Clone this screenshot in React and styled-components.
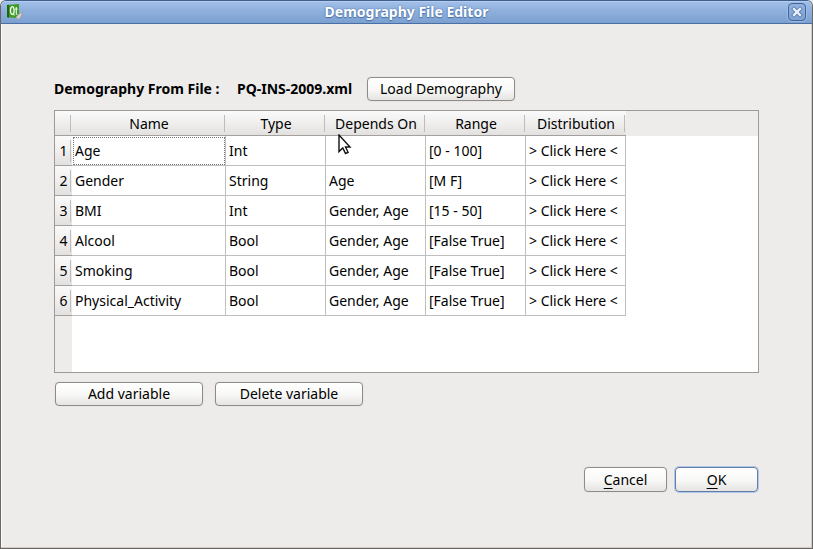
import React from "react";
import styled, { createGlobalStyle, css } from "styled-components";

const GlobalStyle = createGlobalStyle`
  *, *::before, *::after { box-sizing: border-box; }
  body {
    margin: 0;
    background: #edeceb;
    color: #000;
    font: 14px/20px "Noto Sans", "Open Sans", sans-serif;
  }
`;

const Dialog = styled.div`
  display: flex;
  flex-direction: column;
  min-height: 100vh;
  overflow: hidden;
  background: #edeceb;
  border: 1px solid #6b6764;
  border-top-color: #3f5f8c;
  border-radius: 6px 6px 0 0;
  box-shadow: inset -1px -1px 0 #cfcdcb, inset 1px 0 0 #fbfbfa;
`;

const TitleBar = styled.header`
  display: grid;
  grid-template-columns: 24px 1fr 24px;
  align-items: center;
  height: 23px;
  background: linear-gradient(#a3c0e8, #8fb0dd 45%, #7ba0d0);
  border-bottom: 1px solid #4a6fa5;
  box-shadow: inset 0 1px 0 #b4cdf0;
`;

const AppIcon = styled.svg`
  width: 16px;
  height: 16px;
  margin-left: 6px;
`;

const Title = styled.h1`
  margin: 0;
  text-align: center;
  font-size: 14px;
  line-height: 20px;
  font-weight: 700;
  color: #fff;
  text-shadow: 0 0 2px #4a70a8, 0 1px 1px #4a70a8;
`;

const CloseButton = styled.button`
  display: grid;
  place-items: center;
  width: 18px;
  height: 18px;
  padding: 0;
  border: 1px solid #41659a;
  border-radius: 4px;
  background: linear-gradient(#92b2df, #7ea2d3);
  box-shadow: 0 0 0 1px #9dbbe5;
`;

const Content = styled.main`
  display: flex;
  flex: 1;
  flex-direction: column;
  padding: 53px 53px 56px;
`;

const FileRow = styled.div`
  display: flex;
  align-items: center;
  margin-bottom: 9px;
`;

const FileLabel = styled.span`
  width: 183px;
  font-weight: 700;
  white-space: nowrap;
`;

const FileName = styled.strong`
  width: 130px;
  white-space: nowrap;
`;

const Button = styled.button`
  width: ${(p) => (p.$small ? 83 : 148)}px;
  height: ${(p) => (p.$small ? 25 : 24)}px;
  padding: 0;
  border: 1px solid #8f8b88;
  border-radius: 4px;
  background: linear-gradient(#fff, #f9f9f8 50%, #e5e4e2);
  box-shadow: 0 0 1px #bdbab7;
  color: #000;
  font: inherit;
  ${(p) =>
    p.$primary &&
    css`
      border-color: #5f7fae;
      box-shadow: 0 0 0 1px #b4c7e2;
    `}
`;

const Mnemonic = styled.span`
  text-decoration: underline;
  text-underline-offset: 3px;
  text-decoration-skip-ink: none;
`;

const TableFrame = styled.div`
  min-height: 263px;
  border: 1px solid #9c9997;
  background:
    linear-gradient(#edeceb, #edeceb) 0 0 / 100% 25px no-repeat,
    linear-gradient(#edeceb, #edeceb) 0 0 / 17px 100% no-repeat,
    #fff;
`;

const Table = styled.table`
  width: 571px;
  table-layout: fixed;
  border-collapse: separate;
  border-spacing: 0;
`;

const Col = styled.col`
  width: ${(p) => p.$width}px;
`;

const HeadCell = styled.th`
  position: relative;
  height: 25px;
  padding: 2px 0 0;
  border-bottom: 1px solid #a3a09e;
  background:
    linear-gradient(#bfbdbb, #bfbdbb) right 1px center / 1px 17px no-repeat,
    linear-gradient(#fafafa, #f0efee 50%, #e2e1df);
  font-weight: 400;
  text-align: center;
  white-space: nowrap;
`;

const RowHead = styled(HeadCell)`
  height: 30px;
  padding: 0;
  background:
    linear-gradient(#bfbdbb, #bfbdbb) right 1px center / 1px 22px no-repeat,
    linear-gradient(#fafafa, #f0efee 50%, #e2e1df);
`;

const Cell = styled.td`
  height: 30px;
  padding: 0 3px;
  border-right: 1px solid #bfbfbf;
  border-bottom: 1px solid #bfbfbf;
  background: #fff;
  white-space: nowrap;
  ${(p) =>
    p.$focused &&
    css`
      outline: 1px dotted #777;
      outline-offset: -2px;
    `}
`;

const Actions = styled.div`
  display: flex;
  gap: 12px;
  padding: 9px 1px 0;
`;

const Footer = styled.footer`
  display: flex;
  justify-content: flex-end;
  gap: 8px;
  margin-top: auto;
  padding-right: 1px;
`;

const Pointer = styled.svg`
  position: absolute;
  z-index: 1;
  top: 23px;
  left: 12px;
  width: 14px;
  height: 21px;
  pointer-events: none;
`;

const columns = [
  { name: "Name", width: 154 },
  { name: "Type", width: 100 },
  { name: "Depends On", width: 100, pointer: true },
  { name: "Range", width: 100 },
  { name: "Distribution", width: 100 },
];

const rows = [
  ["Age", "Int", "", "[0 - 100]"],
  ["Gender", "String", "Age", "[M F]"],
  ["BMI", "Int", "Gender, Age", "[15 - 50]"],
  ["Alcool", "Bool", "Gender, Age", "[False True]"],
  ["Smoking", "Bool", "Gender, Age", "[False True]"],
  ["Physical_Activity", "Bool", "Gender, Age", "[False True]"],
];

function QtIcon() {
  return (
    <AppIcon viewBox="0 0 16 16" aria-hidden="true">
      <path d="M0 1 12 0v12l-3 2-9-1z" fill="#3d9b22" />
      <path d="M0 1 2 .8V14l-2-1z" fill="#1f6410" />
      <ellipse cx="5.3" cy="6.5" rx="1.8" ry="3.9" fill="none" stroke="#fff" strokeWidth="1.3" />
      <path d="m5.8 9 1.6 2.5M9.3 3v7l1 .5M8.2 5.2h2.4" fill="none" stroke="#e5f4df" strokeWidth="1.2" />
      <path d="M9 13c1-2 3-3 6.500-5-.3 3-2 7-5 7.500z" fill="#d2d0ce" stroke="#918f8e" strokeWidth=".6" />
    </AppIcon>
  );
}

function MousePointer() {
  return (
    <Pointer viewBox="0 0 14 21" aria-hidden="true">
      <path
        d="M1 1v16.500l3.800-3.600 2.700 5.600 2.600-1.200-2.600-5.300H12z"
        fill="#fff"
        stroke="#111"
        strokeWidth="1.4"
      />
    </Pointer>
  );
}

export default function App() {
  return (
    <>
      <GlobalStyle />
      <Dialog role="dialog" aria-labelledby="dialog-title">
        <TitleBar>
          <QtIcon />
          <Title id="dialog-title">Demography File Editor</Title>
          <CloseButton type="button" aria-label="Close">
            <svg width="12" height="12" viewBox="0 0 12 12" aria-hidden="true">
              <path d="m3 3 6 6m0-6-6 6" stroke="#5579ae" strokeWidth="4" strokeLinecap="square" />
              <path d="m3 3 6 6m0-6-6 6" stroke="#eaf0fa" strokeWidth="2.4" strokeLinecap="square" />
            </svg>
          </CloseButton>
        </TitleBar>
        <Content>
          <FileRow>
            <FileLabel>Demography From File :</FileLabel>
            <FileName>PQ-INS-2009.xml</FileName>
            <Button type="button">Load Demography</Button>
          </FileRow>
          <TableFrame>
            <Table>
              <colgroup>
                <Col $width={17} />
                {columns.map((c) => (
                  <Col key={c.name} $width={c.width} />
                ))}
              </colgroup>
              <thead>
                <tr>
                  <HeadCell />
                  {columns.map((c) => (
                    <HeadCell key={c.name} scope="col">
                      {c.name}
                      {c.pointer && <MousePointer />}
                    </HeadCell>
                  ))}
                </tr>
              </thead>
              <tbody>
                {rows.map((row, r) => (
                  <tr key={row[0]}>
                    <RowHead scope="row">{r + 1}</RowHead>
                    {row.map((text, c) => (
                      <Cell key={columns[c].name} $focused={r === 0 && c === 0}>
                        {text}
                      </Cell>
                    ))}
                    <Cell>&gt; Click Here &lt;</Cell>
                  </tr>
                ))}
              </tbody>
            </Table>
          </TableFrame>
          <Actions>
            <Button type="button">Add variable</Button>
            <Button type="button">Delete variable</Button>
          </Actions>
          <Footer>
            <Button type="button" $small>
              <Mnemonic>C</Mnemonic>ancel
            </Button>
            <Button type="button" $small $primary>
              <Mnemonic>O</Mnemonic>K
            </Button>
          </Footer>
        </Content>
      </Dialog>
    </>
  );
}
